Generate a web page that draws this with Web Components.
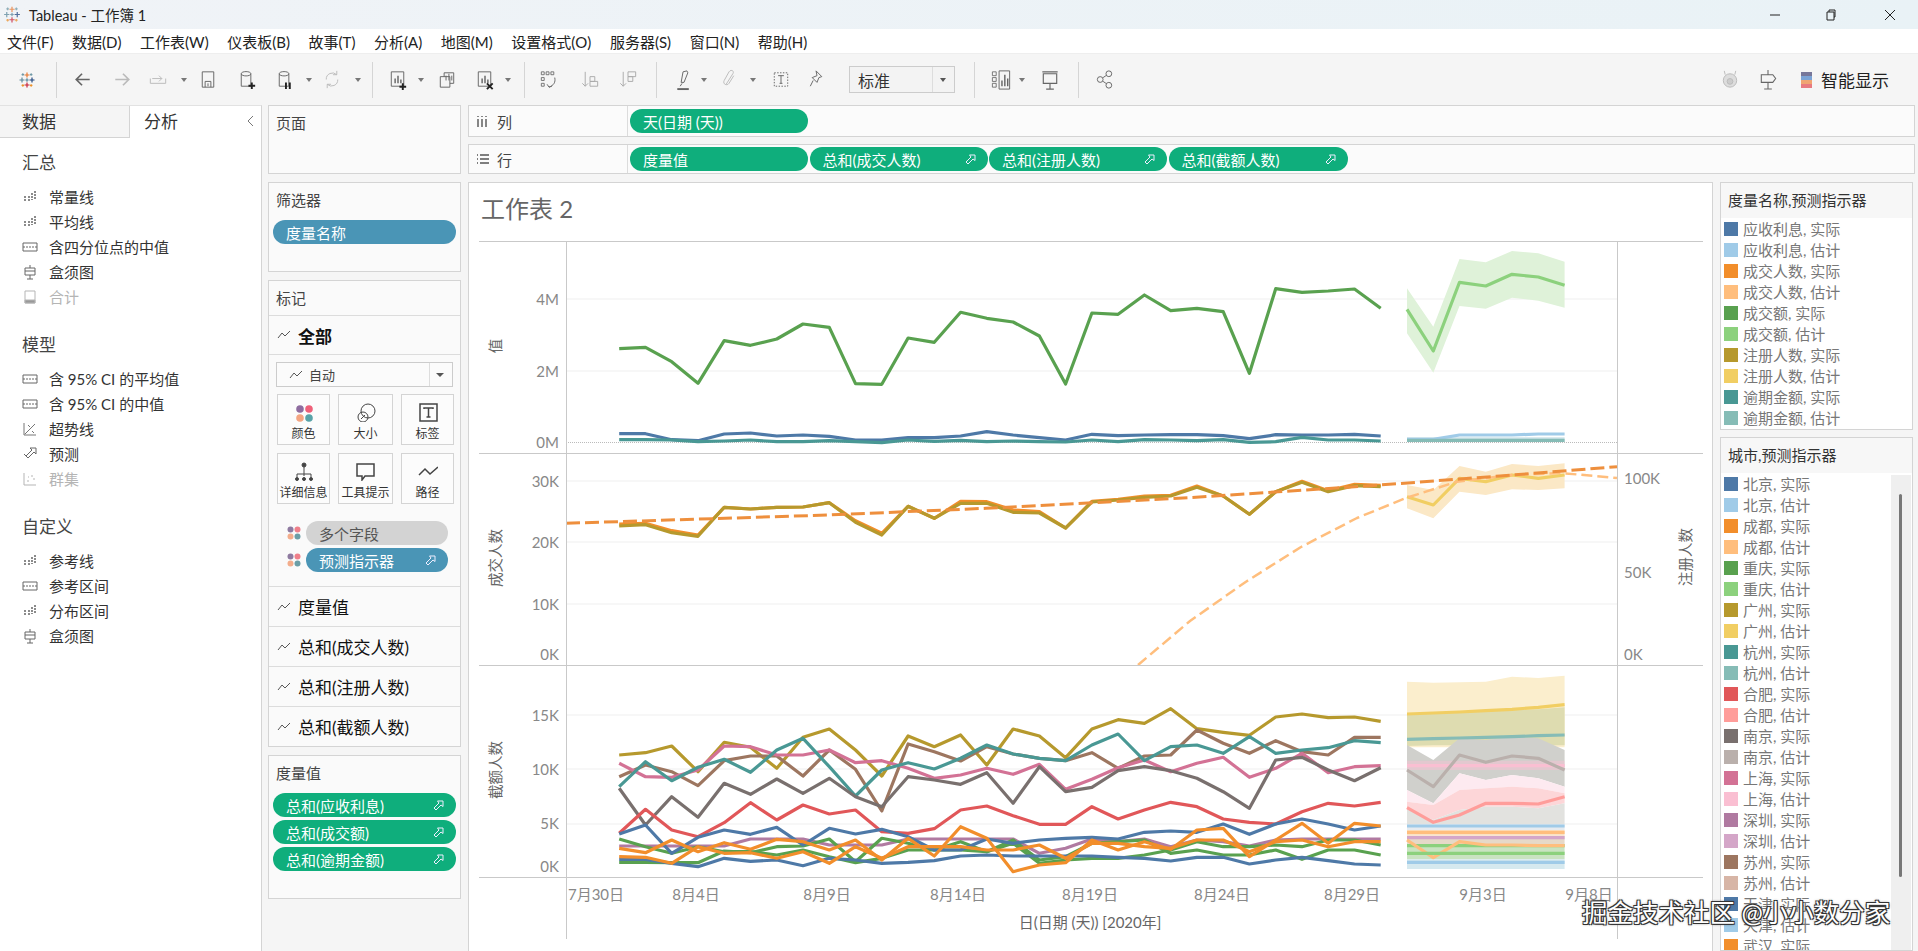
<!DOCTYPE html>
<html lang="zh">
<head>
<meta charset="utf-8">
<title>Tableau</title>
<style>
  html, body { margin: 0; height: 951px; overflow: hidden; background: #fff; }
  body { font-family: Lato, "Noto Sans CJK SC", sans-serif; color: #333; display: flex; flex-direction: column; }
  .main { display: flex; height: 846px; flex: none; }
  .cards { width: 206px; flex: none; background: #f5f5f5; padding: 0 7px 0 6px; box-sizing: border-box; display: flex; flex-direction: column; gap: 8px; }
  .right { flex: 1; background: #f5f5f5; display: flex; flex-direction: column; min-width: 0; }
  .shelves { display: flex; flex-direction: column; gap: 7px; padding-right: 3px; margin-bottom: 8px; }
  .work { display: flex; gap: 7px; flex: 1; min-height: 0; }
  .legends { width: 193px; display: flex; flex-direction: column; gap: 7px; min-height: 0; }
  .mark-grid { display: grid; grid-template-columns: 53px 55px 53px; gap: 8px; padding: 7px 8px 0; }
  .pills { display: flex; flex-direction: column; gap: 3px; }
</style>
</head>
<body>
<tb-titlebar></tb-titlebar>
<tb-menubar></tb-menubar>
<tb-toolbar></tb-toolbar>
<div class="main">
  <tb-data-pane></tb-data-pane>
  <div class="cards">
    <tb-card label="页面" style="height:69px"></tb-card>
    <tb-card label="筛选器" style="height:90px"><tb-pill color="blue" style="margin:-1px -1px 0">度量名称</tb-pill></tb-card>
    <tb-card label="标记" divided style="height:467px">
      <tb-mark-row bold>全部</tb-mark-row>
      <tb-mark-type>自动</tb-mark-type>
      <div class="mark-grid">
        <tb-mark-btn icon="color">颜色</tb-mark-btn>
        <tb-mark-btn icon="size">大小</tb-mark-btn>
        <tb-mark-btn icon="label">标签</tb-mark-btn>
        <tb-mark-btn icon="detail">详细信息</tb-mark-btn>
        <tb-mark-btn icon="tip">工具提示</tb-mark-btn>
        <tb-mark-btn icon="path">路径</tb-mark-btn>
      </div>
      <tb-mark-field style="margin-top:17px" color="gray">多个字段</tb-mark-field>
      <tb-mark-field style="margin-top:3px" color="blue" pin>预测指示器</tb-mark-field>
      <tb-mark-row style="margin-top:14px;border-top:1px solid #dcdcdc">度量值</tb-mark-row>
      <tb-mark-row style="border-top:1px solid #dcdcdc">总和(成交人数)</tb-mark-row>
      <tb-mark-row style="border-top:1px solid #dcdcdc">总和(注册人数)</tb-mark-row>
      <tb-mark-row style="border-top:1px solid #dcdcdc">总和(截额人数)</tb-mark-row>
    </tb-card>
    <tb-card label="度量值" style="height:144px">
      <div class="pills" style="margin:-1px -1px 0">
        <tb-pill color="green" pin>总和(应收利息)</tb-pill>
        <tb-pill color="green" pin>总和(成交额)</tb-pill>
        <tb-pill color="green" pin>总和(逾期金额)</tb-pill>
      </div>
    </tb-card>
  </div>
  <div class="right">
    <div class="shelves">
      <tb-shelf icon="cols" label="列" style="height:32px"><tb-pill color="green" style="width:178px">天(日期 (天))</tb-pill></tb-shelf>
      <tb-shelf icon="rows" label="行" style="height:30px">
        <tb-pill color="green" style="width:178px">度量值</tb-pill>
        <tb-pill color="green" pin style="width:178px">总和(成交人数)</tb-pill>
        <tb-pill color="green" pin style="width:178px">总和(注册人数)</tb-pill>
        <tb-pill color="green" pin style="width:179px">总和(截额人数)</tb-pill>
      </tb-shelf>
    </div>
    <div class="work">
      <tb-view></tb-view>
      <div class="legends">
        <tb-legend label="度量名称,预测指示器" names="应收利息,成交人数,成交额,注册人数,逾期金额" start="0" style="height:248px"></tb-legend>
        <tb-legend label="城市,预测指示器" names="北京,成都,重庆,广州,杭州,合肥,南京,上海,深圳,苏州,天津,武汉" start="0" scroll style="flex:1;min-height:0"></tb-legend>
      </div>
    </div>
  </div>
</div>
<tb-watermark>掘金技术社区 @小小数分家</tb-watermark>

<script>
// icons share one stroke style, drawn on a 20x24 box
const LOGO = '<g stroke-width="1.4" fill="none"><path stroke="#e8762d" d="M10 3v6M7 6h6"/><path stroke="#c72037" d="M10 15v6M7 18h6"/><path stroke="#5b879b" d="M4 9v6M1 12h6"/><path stroke="#1f447e" d="M16 9v6M13 12h6"/><path stroke="#59879b" d="M10 10v4M8 12h4"/><path stroke="#7099a6" d="M5 4v3M3.500 5.500h3M15 4v3M13.500 5.500h3"/><path stroke="#eb912b" d="M5 17v3M3.500 18.500h3M15 17v3M13.500 18.500h3"/></g>';
const TOOL = {
  back: '<path d="M17 12H4M9 6l-6 6 6 6" stroke-width="1.8"/>',
  forward: '<path d="M3 12h13M11 6l6 6-6 6" stroke="#bbb" stroke-width="1.8"/>',
  redo: '<path d="M2 11v5h16v-5M4 11h10M11 8l3 3-3 3" stroke="#bbb"/>',
  save: '<path d="M4 4h12v16H4zM7 20v-6h6v6M10 16v3"/>',
  adddata: '<path d="M4 6c0-3 10-3 10 0v13H4zM4 6c0 3 10 3 10 0"/><path d="M15 15v7M11.500 18.500h7" stroke="#222" stroke-width="2"/>',
  pause: '<path d="M4 6c0-3 10-3 10 0v13H4zM4 6c0 3 10 3 10 0"/><path d="M11 15v7M15 15v7" stroke="#222" stroke-width="2"/>',
  refresh: '<path d="M4 12a6.500 6.500 0 0 1 11-5M16 12a6.500 6.500 0 0 1-11 5M15 3v4h-4M5 21v-4h4" stroke="#bbb"/>',
  newsheet: '<path d="M3 4h13v15H3z"/><path d="M7 16v-5M10 16V8M13 16v-4" stroke-width="1.500"/><path d="M15 16v7M11.500 19.500h7" stroke="#222" stroke-width="2"/>',
  dup: '<path d="M3 9h10v11H3zM7 9V5h10v11h-4"/><path d="M9 13V8M12 13V6M15 13V8"/>',
  clear: '<path d="M3 4h13v15H3z"/><path d="M7 16v-5M10 16V8M13 16v-4" stroke-width="1.500"/><path d="M12 16l6 6M18 16l-6 6" stroke="#222" stroke-width="2"/>',
  swap: '<path d="M2 4h3v3H2zM7 4h3v3H7zM12 4h3v3h-3zM2 10h3v3H2zM2 16h3v3H2z" stroke-width=".9"/><path d="M16 10c1 5-1 8-6 10M8 17l2 3 3-1"/>',
  sortasc: '<path d="M5 4v15M2 16l3 3 3-3" stroke="#aaa"/><path d="M10 14h8v5h-8zM10 9h5v5h-5z" stroke="#aaa"/>',
  sortdesc: '<path d="M5 4v15M2 16l3 3 3-3" stroke="#aaa"/><path d="M10 4h8v5h-8zM10 9h5v5h-5z" stroke="#aaa"/>',
  pen: '<path d="M7 15l2-11 4-1 1 2-4 10zM6 19l2-3"/><path d="M3 22h12" stroke-width="2"/>',
  clip: '<path d="M7 17l7-11c2-3-2-5-4-2L5 13c-2 4 3 6 5 3l5-8" stroke="#bbb"/>',
  tbox: '<path d="M3 5h14v14H3z" stroke-dasharray="1.500 1.500"/><path d="M7 8h6M10 8v8M8.500 16h3"/>',
  pin: '<path d="M9 3l6 6-3 1-2 5-5-5 5-2zM6 13l-3 6"/>',
  chart: '<path d="M8 3h11v19H8z"/><path d="M1 4h4v4H1zM1 10h4v4H1zM1 16h4v4H1z" stroke-width=".9"/><path d="M11 19v-6M14 19V7M17 19v-8" stroke-width="1.500"/>',
  present: '<path d="M3 6h14v10H3zM2 4h16M10 16v6M6 22h8" stroke-width="1.200"/>',
  share: '<circle cx="5" cy="12" r="3"/><circle cx="14" cy="6" r="3"/><circle cx="14" cy="18" r="3"/><path d="M8 10l3-2M8 14l3 2"/>',
  pig: '<g stroke="#bbb"><circle cx="10" cy="13" r="7" fill="#ddd"/><circle cx="10" cy="14" r="3" fill="#ccc"/><path d="M5 7L4 3M15 7l1-4"/></g>',
  sign: '<path d="M10 2v5M10 15v7M6 22h8M3 7h12l3 4-3 4H3z" stroke-width="1.100"/>'
};
const MARK = {
  color: '<circle cx="6" cy="6" r="3.800" fill="#8e6c9f"/><circle cx="15" cy="6" r="3.800" fill="#ef6079"/><circle cx="6" cy="15" r="3.800" fill="#f4a582"/><circle cx="15" cy="15" r="3.800" fill="#58a3a8"/>',
  size: '<g fill="none" stroke="#444"><circle cx="12" cy="8" r="7"/><circle cx="7" cy="14" r="5"/><path d="M5 16l4-4"/></g>',
  label: '<g fill="none" stroke="#444"><path d="M2 1h17v17H2z" stroke-width="1.500"/><path d="M6 6V5h9v1M10.500 5v9M8.500 14h4" stroke-width="1.500"/></g>',
  detail: '<g fill="#444" stroke="#444" stroke-width="1"><circle cx="10" cy="3" r="2"/><circle cx="3" cy="17" r="1.500"/><circle cx="10" cy="17" r="1.500"/><circle cx="17" cy="17" r="1.500"/><path fill="none" d="M10 5v9M3 15v-3h14v3"/></g>',
  tip: '<path fill="none" stroke="#444" stroke-width="1.500" d="M1 2h17v12H9l-3 4v-4H1z"/>',
  path: '<path fill="none" stroke="#444" stroke-width="1.500" d="M1 13l6-6 5 5 8-7"/>'
};
const PIN = '<svg width="11" height="11" viewBox="0 0 11 11" fill="none" stroke="currentColor"><path d="M4.500 1h5.500v5.500L8 5 3 10 1 8l5-5z"/></svg>';
const LINEMARK = '<svg width="14" height="10" viewBox="0 0 14 10" fill="none" stroke="#555"><path d="M1 8l4-5 3 3 5-5"/></svg>';
const TENS = ['#4e79a7','#a0cbe8','#f28e2b','#ffbe7d','#59a14f','#8cd17d','#b6992d','#f1ce63','#499894','#86bcb6','#e15759','#ff9d9a','#79706e','#bab0ac','#d37295','#fabfd2','#b07aa1','#d4a6c8','#9d7660','#d7b5a6','#4e79a7','#a0cbe8','#f28e2b','#ffbe7d'];

class TbTitlebar extends HTMLElement {
  connectedCallback() {
    this.attachShadow({ mode: 'open' });
    this.shadowRoot.innerHTML = `
      <style>
        :host { display: flex; align-items: center; height: 29px; flex: none; background: linear-gradient(90deg, #f0f3f7, #e9f2f6); font-size: 14.500px; color: #222; }
        svg { margin-left: 3px; flex: none; opacity: .75; }
        span { margin-left: 8px; }
        .ctl { margin-left: auto; display: flex; align-items: center; padding-right: 22px; }
        .ctl svg { margin: 0; opacity: 1; }
      </style>
      <svg width="18" height="21" viewBox="0 0 20 24">${LOGO}</svg>
      <span>Tableau - 工作簿 1</span>
      <div class="ctl">
        <svg width="12" height="12" viewBox="0 0 12 12" stroke="#222" fill="none"><path d="M1 6h10"/></svg>
        <svg style="margin-left:44px" width="12" height="12" viewBox="0 0 12 12" stroke="#222" fill="none"><path d="M2 3h7v8H2zM4 3V1h6v7h-1"/></svg>
        <svg style="margin-left:47px" width="12" height="12" viewBox="0 0 12 12" stroke="#222" fill="none"><path d="M1 1l10 10M11 1L1 11"/></svg>
      </div>`;
  }
}

class TbMenubar extends HTMLElement {
  connectedCallback() {
    const items = ['文件(F)','数据(D)','工作表(W)','仪表板(B)','故事(T)','分析(A)','地图(M)','设置格式(O)','服务器(S)','窗口(N)','帮助(H)'];
    this.attachShadow({ mode: 'open' });
    this.shadowRoot.innerHTML = `
      <style>
        :host { display: flex; align-items: center; gap: 18.600px; height: 25px; flex: none; background: #fff; padding-left: 7px; font-size: 15px; color: #222; border-bottom: 1px solid #eee; box-sizing: border-box; }
      </style>
      ${items.map(t => `<span>${t}</span>`).join('')}`;
  }
}

class TbToolbar extends HTMLElement {
  connectedCallback() {
    // [kind, centre x]
    const items = [['logo',27],['sep',56],['back',83],['forward',122],['redo',158],['drop',184],['save',208],['adddata',247],['pause',285],['drop',309],['refresh',332],['drop',358],['sep',372],['newsheet',398],['drop',421],['dup',447],['clear',485],['drop',508],['sep',524],['swap',549],['sortasc',590],['sortdesc',628],['sep',656],['pen',684],['drop',704],['clip',729],['drop',753],['tbox',781],['pin',817],['combo',902],['sep',974],['chart',1001],['drop',1022],['present',1050],['sep',1078],['share',1105],['pig',1730],['sign',1768]];
    const width = { sep: 1, drop: 6, combo: 106 };
    let right = 0;
    const html = items.map(([k, c]) => {
      const w = width[k] || 24;
      const ml = c - w / 2 - right;
      right = c + w / 2;
      const st = `margin-left:${ml}px;width:${w}px`;
      if (k === 'sep') return `<i class="sep" style="${st}"></i>`;
      if (k === 'drop') return `<i class="drop" style="${st}"></i>`;
      if (k === 'combo') return `<div class="combo" style="${st}"><span>标准</span><b></b></div>`;
      return `<svg style="${st}" height="${k === 'logo' ? 20 : 23}" viewBox="0 0 20 24" fill="none" stroke="#666">${k === 'logo' ? LOGO : TOOL[k]}</svg>`;
    }).join('');
    this.attachShadow({ mode: 'open' });
    this.shadowRoot.innerHTML = `
      <style>
        :host { display: flex; align-items: center; height: 51px; flex: none; background: #f5f5f5; }
        svg { flex: none; }
        .sep { height: 36px; background: #d5d5d5; flex: none; }
        .drop { height: 0; border-top: 4px solid #777; border-left: 3px solid transparent; border-right: 3px solid transparent; box-sizing: border-box; flex: none; }
        .combo { height: 27px; box-sizing: border-box; border: 1px solid #ccc; background: #f3f3f3; display: flex; align-items: center; font-size: 16px; flex: none; }
        .combo span { flex: 1; padding-left: 8px; }
        .combo b { width: 21px; height: 25px; border-left: 1px solid #ddd; position: relative; }
        .combo b::after { content: ''; position: absolute; left: 7px; top: 11px; border-top: 4px solid #555; border-left: 3.500px solid transparent; border-right: 3.500px solid transparent; }
        .smart { margin-left: 21px; display: flex; align-items: center; gap: 9px; font-size: 17px; color: #222; flex: none; }
        .bars { display: flex; flex-direction: column; width: 11px; }
        .bars i { height: 4px; }
      </style>
      ${html}
      <div class="smart"><div class="bars"><i style="background:#77779a"></i><i style="background:#7ba3d6"></i><i style="background:#f0a472"></i><i style="background:#e87a80"></i></div>智能显示</div>`;
  }
}

class TbDataPane extends HTMLElement {
  connectedCallback() {
    const ic = {
      line: '<path d="M2 8h2M2 11h2M6 8h2M6 11h2M10 4v7M13 2v9" stroke-width="1.500" stroke-dasharray="2 1"/>',
      band: '<path d="M1 4h14v8H1z"/><path d="M1 8h14" stroke-dasharray="2 1"/>',
      box: '<path d="M8 1v3M3 4h10v7H3zM3 7h10M8 11v4M5 15h6"/>',
      total: '<path d="M3 2h10v12H3z"/><path d="M3 11h10v3H3z" fill="#999"/>',
      trend: '<path d="M2 2v12h12M3 13L13 3M6 4l2 2M10 10l2 2" stroke-width=".9"/>',
      fore: '<path d="M2 8l2 2 6-6-2-2h6v6l-2-2-6 6z"/>',
      cluster: '<path d="M2 2v12h12M5 10h2M9 5h2M11 8h2M6 6h1"/>'
    };
    const sec = (h, rows) => `<h3>${h}</h3>` + rows.map(([i, t, off]) =>
      `<div class="row${off ? ' off' : ''}"><svg width="16" height="16" viewBox="0 0 16 16" fill="none" stroke="currentColor">${ic[i]}</svg><span>${t}</span></div>`).join('');
    this.attachShadow({ mode: 'open' });
    this.shadowRoot.innerHTML = `
      <style>
        :host { display: block; width: 262px; flex: none; box-sizing: border-box; background: #fff; border-right: 1px solid #d4d4d4; border-top: 1px solid #e2e2e2; }
        .tabs { display: flex; height: 32px; font-size: 17px; position: relative; }
        .tabs div { padding-left: 22px; line-height: 32px; box-sizing: border-box; }
        .tabs .a { width: 130px; background: #f5f5f5; border-right: 1px solid #d4d4d4; border-bottom: 1px solid #d4d4d4; }
        .tabs .b { padding-left: 14px; color: #333; }
        .tabs svg { position: absolute; left: 247px; top: 9px; }
        h3 { margin: 23px 0 9px; font-weight: 400; font-size: 17px; line-height: 25px; padding-left: 22px; color: #444; }
        h3:first-child { margin-top: 12px; }
        .row { height: 25px; display: flex; align-items: center; padding-left: 22px; font-size: 15px; color: #333; }
        .row svg { color: #666; flex: none; }
        .row span { margin-left: 11px; }
        .row.off, .row.off svg { color: #b5b5b5; }
      </style>
      <div class="tabs"><div class="a">数据</div><div class="b">分析</div>
        <svg width="8" height="12" viewBox="0 0 8 12" fill="none" stroke="#777"><path d="M6 1L1 6l5 5"/></svg></div>
      <div class="list">
      ${sec('汇总', [['line','常量线'],['line','平均线'],['band','含四分位点的中值'],['box','盒须图'],['total','合计',1]])}
      ${sec('模型', [['band','含 95% CI 的平均值'],['band','含 95% CI 的中值'],['trend','超势线'],['fore','预测'],['cluster','群集',1]])}
      ${sec('自定义', [['line','参考线'],['band','参考区间'],['line','分布区间'],['box','盒须图']])}
      </div>`;
  }
}

class TbCard extends HTMLElement {
  connectedCallback() {
    const divided = this.hasAttribute('divided');
    this.attachShadow({ mode: 'open' });
    this.shadowRoot.innerHTML = `
      <style>
        :host { display: block; flex: none; box-sizing: border-box; border: 1px solid #d4d4d4; background: #fafafa; }
        .t { font-size: 15px; color: #444; padding-left: 7px; height: ${divided ? 35 : 38}px; line-height: 35px; box-sizing: border-box; ${divided ? 'border-bottom: 1px solid #dcdcdc;' : ''} }
        .b { padding: 0 ${divided ? 0 : 5}px; }
      </style>
      <div class="t">${this.getAttribute('label')}</div>
      <div class="b"><slot></slot></div>`;
  }
}

class TbPill extends HTMLElement {
  connectedCallback() {
    const bg = { green: '#0fae7c', blue: '#4a95b6', gray: '#d3d3d3' }[this.getAttribute('color')];
    const pin = this.hasAttribute('pin');
    this.attachShadow({ mode: 'open' });
    this.shadowRoot.innerHTML = `
      <style>
        :host { display: flex; align-items: center; height: 24px; box-sizing: border-box; border-radius: 12px; background: ${bg}; color: ${bg === '#d3d3d3' ? '#555' : '#fff'}; font-size: 15px; padding: 0 7px 0 13px; flex: none; white-space: nowrap; }
        .txt { flex: 1; }
        .pin { display: flex; color: #eef; margin-left: 6px; margin-right: 5px; }
      </style>
      <div class="txt"><slot></slot></div>${pin ? `<div class="pin">${PIN}</div>` : ''}`;
  }
}

class TbMarkRow extends HTMLElement {
  connectedCallback() {
    const bold = this.hasAttribute('bold');
    this.attachShadow({ mode: 'open' });
    this.shadowRoot.innerHTML = `
      <style>
        :host { display: flex; align-items: center; height: ${bold ? 39 : 40}px; box-sizing: border-box; font-size: 17px; font-weight: ${bold ? 700 : 400}; color: #111; padding-left: 8px; gap: 7px; ${bold ? 'border-bottom: 1px solid #dcdcdc;' : ''} }
        svg { flex: none; }
      </style>
      ${LINEMARK}<span><slot></slot></span>`;
  }
}

class TbMarkType extends HTMLElement {
  connectedCallback() {
    this.attachShadow({ mode: 'open' });
    this.shadowRoot.innerHTML = `
      <style>
        :host { display: flex; align-items: center; height: 25px; margin: 7px 7px 0 7px; box-sizing: border-box; border: 1px solid #ccc; background: #fbfbfb; font-size: 13px; color: #444; padding-left: 12px; gap: 6px; }
        .s { flex: 1; }
        b { width: 22px; height: 23px; border-left: 1px solid #ddd; position: relative; }
        b::after { content: ''; position: absolute; left: 6px; top: 10px; border-top: 4px solid #555; border-left: 4px solid transparent; border-right: 4px solid transparent; }
      </style>
      ${LINEMARK}<span class="s"><slot></slot></span><b></b>`;
  }
}

class TbMarkBtn extends HTMLElement {
  connectedCallback() {
    this.attachShadow({ mode: 'open' });
    this.shadowRoot.innerHTML = `
      <style>
        :host { display: flex; flex-direction: column; align-items: center; height: 51px; box-sizing: border-box; border: 1px solid #d4d4d4; background: #fcfcfc; font-size: 12px; color: #333; padding-top: 8px; white-space: nowrap; }
        span { margin-top: 3px; line-height: 18px; }
      </style>
      <svg width="20" height="19" viewBox="0 0 20 19">${MARK[this.getAttribute('icon')]}</svg>
      <span><slot></slot></span>`;
  }
}

class TbMarkField extends HTMLElement {
  connectedCallback() {
    const dots = '<circle cx="3.500" cy="3.500" r="3" fill="#8e7aa0"/><circle cx="10.500" cy="3.500" r="3" fill="#ef7f8a"/><circle cx="3.500" cy="10.500" r="3" fill="#f3ad8c"/><circle cx="10.500" cy="10.500" r="3" fill="#6c9ea6"/>';
    const p = this.hasAttribute('pin') ? 'pin' : '';
    this.attachShadow({ mode: 'open' });
    this.shadowRoot.innerHTML = `
      <style>
        :host { display: flex; align-items: center; padding-left: 18px; gap: 5px; }
        tb-pill { width: 142px; }
      </style>
      <svg width="14" height="14" viewBox="0 0 14 14">${dots}</svg>
      <tb-pill color="${this.getAttribute('color')}" ${p}><slot></slot></tb-pill>`;
  }
}

class TbShelf extends HTMLElement {
  connectedCallback() {
    const icons = {
      cols: '<path d="M2 5v8M6 5v8M10 5v8M2 2v1M6 2v1M10 2v1" stroke-width="1.400"/>',
      rows: '<path d="M4 3h9M4 7h9M4 11h9M1 3h1M1 7h1M1 11h1" stroke-width="1.400"/>'
    };
    this.attachShadow({ mode: 'open' });
    this.shadowRoot.innerHTML = `
      <style>
        :host { display: flex; align-items: stretch; box-sizing: border-box; background: #fbfbfb; border: 1px solid #d4d4d4; flex: none; }
        .h { width: 159px; flex: none; display: flex; align-items: center; gap: 7px; padding-left: 7px; box-sizing: border-box; border-right: 1px solid #dcdcdc; font-size: 15px; color: #444; }
        .p { display: flex; align-items: center; gap: 1.500px; padding-left: 2px; }
      </style>
      <div class="h"><svg width="14" height="14" viewBox="0 0 14 14" fill="none" stroke="#555">${icons[this.getAttribute('icon')]}</svg>${this.getAttribute('label')}</div>
      <div class="p"><slot></slot></div>`;
  }
}

class TbLegend extends HTMLElement {
  connectedCallback() {
    const names = this.getAttribute('names').split(',');
    const scroll = this.hasAttribute('scroll');
    const rows = [];
    names.forEach((n, i) => {
      rows.push([n + ', 实际', TENS[i * 2]]);
      rows.push([n + ', 估计', TENS[i * 2 + 1]]);
    });
    this.attachShadow({ mode: 'open' });
    this.shadowRoot.innerHTML = `
      <style>
        :host { display: flex; flex-direction: column; box-sizing: border-box; border: 1px solid #d4d4d4; background: #fff; overflow: hidden; position: relative; }
        .t { height: 35px; flex: none; background: #f7f7f7; font-size: 15px; line-height: 34px; padding-left: 7px; color: #333; white-space: nowrap; }
        .l { padding: 0 0 0 3px; overflow: hidden; }
        .r { height: 21px; display: flex; align-items: center; gap: 5px; font-size: 15px; color: #777; white-space: nowrap; }
        .r i { width: 14px; height: 14px; flex: none; }
        .sb { position: absolute; left: 170px; top: 37px; bottom: 0; width: 20px; background: #efefef; }
        .sb::after { content: ''; position: absolute; left: 8px; top: 19px; width: 2.500px; height: 383px; background: #777; border-radius: 2px; }
      </style>
      <div class="t">${this.getAttribute('label')}</div>
      <div class="l">${rows.map(([t, c]) => `<div class="r"><i style="background:${c}"></i><span>${t}</span></div>`).join('')}</div>
      ${scroll ? '<div class="sb"></div>' : ''}`;
  }
}

class TbView extends HTMLElement {
  connectedCallback() {
    const X = i => 619.2 + 26.26 * i;
    // the series below are read off the reference in crop pixels; y crops are 3x
    const fromCrop = (base, arr) => arr.map(v => base + v / 3);
    const line = (pts, c, w = 3.2, extra = '') => `<path d="M${pts.map(p => p[0].toFixed(1) + ' ' + p[1].toFixed(1)).join('L')}" fill="none" stroke="${c}" stroke-width="${w}" stroke-linejoin="round" ${extra}/>`;
    const series = (ys, c, start = 0, w = 3.2) => line(ys.map((y, i) => [X(start + i), y]), c, w);
    const band = (top, bot, c, op = 1) => {
      const t = top.map((y, i) => [X(30 + i), y]);
      const b = bot.map((y, i) => [X(30 + i), y]).reverse();
      return `<path d="M${t.concat(b).map(p => p[0].toFixed(1) + ' ' + p[1].toFixed(1)).join('L')}Z" fill="${c}" opacity="${op}"/>`;
    };
    const joined = (a, b, ba, bb) => fromCrop(ba, a).concat(fromCrop(bb, b));
    const flat = v => [v, v, v, v, v, v, v];
    const C = { blue: '#4e79a7', lblue: '#a0cbe8', org: '#f28e2b', lorg: '#ffbe7d', grn: '#59a14f', lgrn: '#8cd17d', gold: '#b6992d', yel: '#f1ce63', teal: '#499894', lteal: '#86bcb6', red: '#e15759', lred: '#ff9d9a', gray: '#79706e', lgray: '#bab0ac', pink: '#d37295', lpink: '#fabfd2', pur: '#b07aa1', lpur: '#d4a6c8', brn: '#9d7660' };

    let s = '';
    // grid lines
    [299, 371, 481, 542, 604, 715, 769, 824].forEach(y => { s += `<path d="M566 ${y}H1617" stroke="#efefef"/>`; });
    s += '<path d="M566 442.500H1617" stroke="#bbb" stroke-dasharray="1 1"/>';

    // pane 1
    const f = y => fromCrop(180, y);
    s += band(f([325, 440, 237, 247, 213, 220, 245]), f([460, 578, 378, 386, 353, 362, 383]), '#dff2d9');
    s += series(joined([506,502,545,610,482,496,477,432,442,611,613,474,487,397,415,426,468,612,399,403,345,392],[385,395,580,326,337,333,327,385],180,180), C.grn);
    s += series(joined([761,761,779,782,762,759,768,765,769,780,780,773,773,768,755,765,773,780,763,767,765,764],[764,767,776,764,765,765,763,768],180,180), C.blue);
    s += series(joined([779,779,780,785,783,780,785,785,782,785,788,780,784,781,785,783,785,786,780,785,779,780],[782,779,787,785,772,780,780,783],180,180), C.teal);
    s += band(f(flat(772)), f(flat(786)), '#cfe4ea');
    s += series(f([778,778,765,765,765,762,762]), C.lblue, 30);
    s += series(f(flat(781)), C.lteal, 30);
    s += series(f([388,513,307,318,283,291,316]), C.lgrn, 30);

    // pane 2
    const g = y => fromCrop(440, y);
    s += band(g([135,150,78,95,72,78,70]), g([205,235,155,165,148,150,145]), '#fbe8c6');
    s += series(joined([192,190,212,225,142,147,142,141,128,182,220,139,175,124,125,150,155,204,124,118,108,106],[138,168,223,155,124,152,133,136],460,440), C.org);
    s += series(joined([198,194,218,229,142,147,142,141,128,187,225,139,175,130,130,157,159,204,126,120,112,108],[142,168,223,155,127,155,137,140],460,440), C.gold);
    s += series(g([170,195,115,125,105,115,105]), C.yel, 30);
    s += line([[1138,665],[1190,621],[1246,581.7],[1301,547],[1357,518],[1406,498],[1457,481.7],[1511,475],[1561,473],[1617,478]], C.lorg, 2.5, 'stroke-dasharray="11 5"');
    s += line([[566,523.3],[828,515],[986,508.3],[1190,497.7],[1380,485],[1500,476],[1617,466.7]], '#ee8f3d', 3, 'stroke-dasharray="14 5"');

    // pane 3: forecast bands first, they sit under the lines
    const h = y => fromCrop(670, y);
    const t3 = [360,400,310,330,315,325,350], t4 = [395,405,360,355,350,355,370], t5 = [415,450,420,410,410,415,400];
    s += band(h([35,38,37,35,20,24,17]), h(flat(232)), '#fbeecd');
    s += band(h([130,128,126,124,120,118,112]), h([228,226,226,226,226,226,226]), '#dedcb0');
    s += band(h([225,270,205,210,200,205,240]), h(t3), '#d0d0cc');
    s += band(h(flat(272)), h(flat(300)), '#fabfd2', .45);
    s += band(h(t3), h(t4), '#fdeaf0');
    s += band(h(t4), h(t5), '#fdd6d8');
    s += band(h(t5), h(flat(462)), '#e2e2df');
    s += band(h(flat(462)), h(flat(480)), '#e6ebf0');
    s += band(h(flat(480)), h(flat(497)), '#fbe2c4');
    s += band(h(flat(497)), h(flat(525)), '#e6d9c8');
    s += band(h(flat(525)), h(flat(568)), '#c9e3c1');
    s += band(h(flat(568)), h(flat(597)), '#d6e9ef');
    const actual = [
      [C.gold,[255,248,228,305,217,232,295,202,177,240,318,198,230,195,285,177,198,263,177,149,160,116],[176,187,196,141,132,143,141,154]],
      [C.brn,[320,285,305,347,272,258,258,318,240,298,423,222,245,273,230,252,265,272,248,295,258,255],[180,220,250,212,245,255,202,202]],
      [C.pink,[280,320,322,300,228,230,255,255,240,278,272,295,325,315,295,313,283,358,328,293,270,305],[280,262,322,295,250,308,290,287]],
      [C.teal,[350,275,332,292,268,307,240,205,290,378,300,278,297,265,225,252,265,272,225,192,272,230],[225,250,200,250,240,233,212,218]],
      [C.gray,[355,465,380,442,340,373,327,370,325,380,410,320,330,343,308,400,290,365,352,302,290,302],[325,365,415,270,262,300,332,293]],
      [C.red,[490,418,480,500,458,398,450,405,432,420,485,490,476,420,408,437,463,463,410,447,420,397],[410,447,457,462,425,400,408,397]],
      [C.pur,[528,528,528,528,528,507,507,507,525,525,525,507,507,507,507,507,550,535,507,515,507,530],[510,515,528,510,507,507,507,507]],
      [C.grn,[507,530,550,530,545,545,555,540,560,578,565,540,540,540,545,520,580,570,565,565,555,540],[515,530,530,525,530,510,510,525]],
      [C.grn,[577,577,578,578,543,548,530,528,507,575,505,520,540,515,545,510,570,560,520,515,510,550],[540,555,555,540,568,540,540,555]],
      [C.blue,[568,568,580,590,565,574,570,587,565,570,580,577,572,558,555,558,558,558,558,562,565,573],[562,562,582,570,562,572,582,585]],
      [C.blue,[492,465,550,502,480,493,472,525,475,492,478,500,540,540,507,520,510,505,502,507,487,483],[487,462,493,462,447,462,480,468]],
      [C.org,[560,562,580,530,550,548,565,545,580,530,565,530,530,530,540,540,525,565,520,520,530,535],[510,510,545,515,510,530,515,515]],
      [C.org,[535,548,510,545,518,538,508,515,540,510,570,505,558,470,505,605,585,578,510,540,515,538],[480,475,560,510,460,520,460,468]]
    ];
    actual.forEach(([c, a, b]) => { s += series(h(a.concat(b)), c); });
    const fore = [
      [C.yel,[132,129,126,122,118,112,104]], [C.lteal,[208,206,204,202,200,197,195]],
      [C.lpink,flat(287)], [C.lgray,[300,350,255,277,258,265,300]], [C.lred,[413,457,435,400,400,402,380]],
      [C.lblue,flat(468)], [C.lorg,flat(487)], [C.lpur,flat(503)], [C.lgrn,flat(527)], [C.lorg,[510,563,515,525,525,527,527]],
      [C.lgrn,flat(550)], [C.lblue,flat(577)]
    ];
    fore.forEach(([c, a]) => { s += series(h(a), c, 30); });

    // pane rules and axes
    [241, 453, 665, 877].forEach(y => { s += `<path d="M479 ${y}.5H1703" stroke="#c9c9c9"/>`; });
    s += '<path d="M566.500 241V939M1617.500 241V939" stroke="#c9c9c9"/>';

    const T = (x, y, t, a = 'end') => `<text x="${x}" y="${y}" text-anchor="${a}" class="ax">${t}</text>`;
    [[300,'4M'],[372,'2M'],[443,'0M'],[482,'30K'],[543,'20K'],[605,'10K'],[655,'0K'],[716,'15K'],[770,'10K'],[824,'5K'],[867,'0K']].forEach(([y, t]) => { s += T(559, y + 5, t); });
    [[479,'100K'],[573,'50K'],[655,'0K']].forEach(([y, t]) => { s += T(1624, y + 5, t, 'start'); });
    [[596,'7月30日'],[696,'8月4日'],[827,'8月9日'],[958,'8月14日'],[1090,'8月19日'],[1222,'8月24日'],[1352,'8月29日'],[1483,'9月3日'],[1589,'9月8日']].forEach(([x, t]) => { s += T(x, 900, t, 'middle'); });
    s += `<text x="1090" y="928" text-anchor="middle" class="ax2">日(日期 (天)) [2020年]</text>`;
    [[497,346,'值'],[497,558,'成交人数'],[497,770,'截额人数'],[1687,557,'注册人数']].forEach(([x, y, t]) => {
      s += `<text x="${x}" y="${y}" text-anchor="middle" dominant-baseline="middle" class="ax3" transform="rotate(-90 ${x} ${y})">${t}</text>`;
    });

    this.attachShadow({ mode: 'open' });
    this.shadowRoot.innerHTML = `
      <style>
        :host { display: flex; flex-direction: column; width: 1245px; flex: none; box-sizing: border-box; background: #fff; border: 1px solid #d4d4d4; border-bottom: 0; overflow: hidden; }
        .title { height: 53px; flex: none; box-sizing: border-box; padding: 12px 0 0 12px; font-size: 24px; line-height: 28px; color: #666; }
        svg { display: block; flex: none; }
        .ax { font-size: 15px; fill: #888; }
        .ax2 { font-size: 15px; fill: #666; }
        .ax3 { font-size: 14.500px; fill: #666; }
      </style>
      <div class="title">工作表 2</div>
      <svg width="1243" height="715" viewBox="469 236 1243 715">${s}</svg>`;
  }
}

class TbWatermark extends HTMLElement {
  connectedCallback() {
    this.attachShadow({ mode: 'open' });
    this.shadowRoot.innerHTML = `
      <style>
        :host { position: absolute; left: 1582px; top: 895px; font-size: 25.500px; line-height: 34px; color: #fff; white-space: nowrap; text-shadow: 1px 1px 0 #333, -1px 1px 0 #333, 1px -1px 0 #333, -1px -1px 0 #333, 0 0 3px #333; }
      </style>
      <slot></slot>`;
  }
}

customElements.define('tb-pill', TbPill);
customElements.define('tb-titlebar', TbTitlebar);
customElements.define('tb-menubar', TbMenubar);
customElements.define('tb-toolbar', TbToolbar);
customElements.define('tb-data-pane', TbDataPane);
customElements.define('tb-card', TbCard);
customElements.define('tb-mark-row', TbMarkRow);
customElements.define('tb-mark-type', TbMarkType);
customElements.define('tb-mark-btn', TbMarkBtn);
customElements.define('tb-mark-field', TbMarkField);
customElements.define('tb-shelf', TbShelf);
customElements.define('tb-legend', TbLegend);
customElements.define('tb-view', TbView);
customElements.define('tb-watermark', TbWatermark);
</script>
</body>
</html>
